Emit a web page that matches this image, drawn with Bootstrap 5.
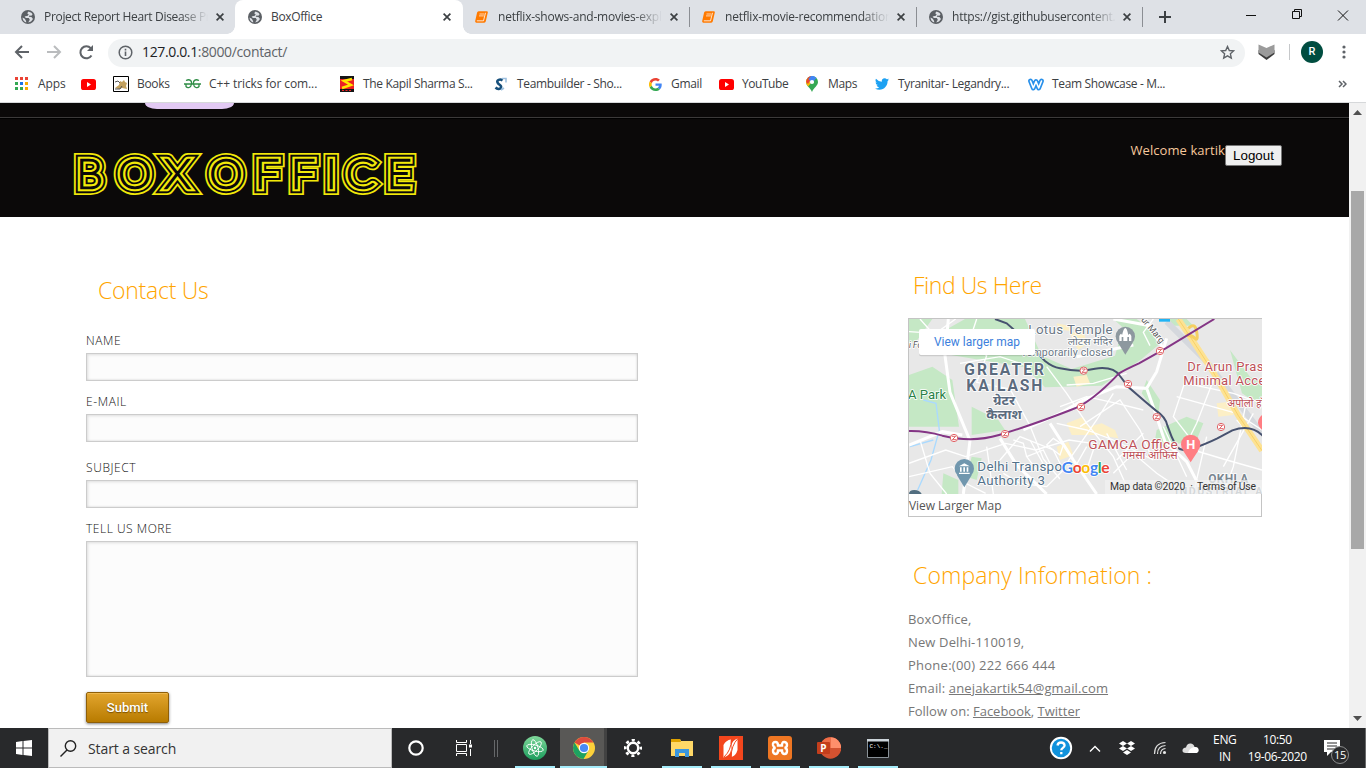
<!DOCTYPE html>
<html lang="en">
<head>
<meta charset="utf-8">
<meta name="viewport" content="width=device-width, initial-scale=1">
<title>BoxOffice</title>
<link href="https://cdn.jsdelivr.net/npm/bootstrap@5.3.0/dist/css/bootstrap.min.css" rel="stylesheet">
<style>
body{font-family:"Open Sans","Noto Sans",sans-serif;font-size:12px;height:768px;overflow:hidden;background:#fff;color:#3c4043}
svg{display:block;flex:none}
/* browser frame */
.tabstrip{height:34px;background:#dee1e6}
.tabitem{height:34px;position:relative;padding-left:16px}
.tabitem .ttl{white-space:nowrap;overflow:hidden;line-height:20px;margin-left:8px;letter-spacing:-.22px}
.fadeout{-webkit-mask-image:linear-gradient(90deg,#000 calc(100% - 28px),transparent)}
.tab-on{background:#fff;border-radius:8px 8px 0 0}
.tab-on::before,.tab-on::after{content:"";position:absolute;bottom:0;width:8px;height:8px}
.tab-on::before{left:-8px;background:radial-gradient(circle at 0 0,transparent 7.5px,#fff 8px)}
.tab-on::after{right:-8px;background:radial-gradient(circle at 100% 0,transparent 7.5px,#fff 8px)}
.tabsep{width:1px;height:20px;background:#8b8e93}
.toolbar{height:36px}
.omnibox{height:28px;border-radius:14px;background:#f1f3f4;margin-left:22px;width:1137px;margin-top:1px;padding-left:10px;padding-right:10px}
.omnibox .addr{font-size:14px;letter-spacing:-.36px;color:#5f6368;margin-left:9px;margin-top:-2px}
.omnibox .addr b{font-weight:400;color:#202124}
.avatar{width:22px;height:22px;background:#004d40;color:#fff;font:500 11px/22px Roboto,sans-serif}
.bookmarks{display:grid;height:33px;padding-left:14px;grid-template-columns:67px 31px 72px 155px 155px 154px 70px 87px 70px 152px 308px 20px;align-items:center;border-bottom:1px solid #d6d8da;letter-spacing:-.1px}
.bm{display:flex;align-items:center;gap:7px;white-space:nowrap;line-height:18px;margin-top:-4px}
.bm.snug{letter-spacing:-.34px}
/* page */
.viewport{height:625px}
.masthead{height:114px;background:#0b0909}
.masthead .topline{height:15px;border-bottom:1px solid #3c3a3a;padding-left:145px}
.pill{width:89px;height:6px;background:#e2c9f3;border-radius:0 0 12px 12px/0 0 6px 6px}
.masthead .inner{border-top:1px solid #000;height:99px;padding:26px 67px 0 72px}
.hello{color:#f7c89c;font-size:13px;line-height:20px;letter-spacing:.08px;margin-top:-5px}
.logout{font:13.333px/17px "Liberation Sans",sans-serif;color:#000;background:#efefef;border:1px solid #767676;border-radius:2px;padding:1px 6px;width:57px;height:21px;white-space:nowrap}
.contact-col{width:552px;margin-left:86px;padding-top:58px}
.info-col{width:354px;margin-left:270px;padding-top:53px}
.ttl-lg{font-size:23px;line-height:30px;font-weight:300;color:#ffa500;margin:0;letter-spacing:-.25px;white-space:nowrap}
.lbl{display:block;line-height:20px;font-size:12px;color:#111;margin:11px 0 2px;letter-spacing:.6px;font-weight:300}
.fld{height:28px;border-radius:0;border:1px solid #ccc;background:#fcfcfc;box-shadow:inset 1px 1px 3px rgba(0,0,0,.12),inset -1px -1px 2px rgba(0,0,0,.06);resize:none;padding:2px 6px}
textarea.fld{height:136px}
.send{width:83px;height:31px;margin-top:15px;border:1px solid #8f5f08;border-radius:2px;background:linear-gradient(#e2a52e,#b87b00);box-shadow:inset 0 1px #edb94f,0 1px 3px rgba(0,0,0,.5);color:#fff;font:500 13px/29px Roboto,sans-serif;text-shadow:0 1px 1px #7a5000;padding:0}
.mapbox{width:354px;height:199px;border:1px solid #c4c4c4;margin-top:18px}
.mapbox a{font-size:12px;line-height:24px;color:#555;text-decoration:none;display:block;letter-spacing:-.05px}
.addrlist{font-size:13px;line-height:23px;margin-top:18px;color:#777;letter-spacing:.14px}
.addrlist a{color:#777}
.sbar{width:17px;background:#f1f1f1}
.sbar .thumb{width:13px;height:358px;background:#a8a8a8;margin-top:72px}
/* taskbar */
.taskbar{height:40px;background:#28292b;color:#fff}
.startbtn{width:48px}
.searchbox{width:344px;height:40px;background:#f1f1f1;border:1px solid #bbb;padding-left:11px;font-size:14px;color:#333;letter-spacing:-.1px}
.app{width:49px;height:40px;position:relative;display:flex;align-items:center;justify-content:center}
.app.run::after{content:"";position:absolute;bottom:0;left:5px;width:40px;height:2px;background:#a5ecfa}
.app.live{background:linear-gradient(90deg,transparent 1px,#595856 1px 45px,#424242 45px 48px,transparent 48px)}
.app.live::after{left:1px;width:47px}
.tray{letter-spacing:-.35px;font-size:12px;line-height:17px;text-align:center}
</style>
</head>
<body>
<svg width="0" height="0" class="position-absolute" aria-hidden="true">
<symbol id="globe" viewBox="0 0 14 14"><circle cx="7" cy="7" r="7" fill="#5b5f64"/><path d="M7.500 1.500 6.200 3.200l1.500 1.400-.9 1.200-3.200.6 1.200 1.500 3 .2 1 1.600-1.600 2.900 2.800-1 2-2.700-1.600-1.900-2.600-.2.6-1.300 2 .2 1.200-1.400-1.200-1.500zM1.500 7.400l2.300 1.400 1.300 2.100.1 1.600C3 11.600 1.700 10 1.500 7.400z" fill="#dee1e6"/></symbol>
<symbol id="xx" viewBox="0 0 8 8"><path d="M.6.6l6.800 6.800M7.400.6.6 7.400" stroke="#3c4043" stroke-width="1.700"/></symbol>
<symbol id="book" viewBox="0 0 13 12"><path d="M3.600.3h8.200q1.300.1 1 1.200l-2 8.700q-.3 1.400-1.600 1.600H1.300Q-.1 11.500.2 10L2.100 1.600Q2.400.4 3.600.3z" fill="#ff7a00"/><path d="M4.500 3h4.800M4 4.900h4.800" stroke="#fff" stroke-width=".7"/><path d="M1.800 9.800h6.700l2-8" stroke="#fff" stroke-width=".8" fill="none"/></symbol>
<symbol id="yt" viewBox="0 0 15 11"><rect width="15" height="11" rx="2.600" fill="#f00"/><path d="M6 3l4 2.500L6 8z" fill="#fff"/></symbol>
</svg>

<!-- tab strip -->
<header>
<div class="tabstrip d-flex align-items-center">
  <div class="tabitem d-flex align-items-center" style="width:235px;padding-left:21px"><svg width="14" height="14"><use href="#globe"/></svg><span class="ttl fadeout" style="width:164px;margin-left:9px;letter-spacing:-.32px">Project Report Heart Disease Prediction</span><svg class="ms-2" width="8" height="8"><use href="#xx"/></svg></div>
  <div class="tabitem tab-on d-flex align-items-center" style="width:228px;padding-left:13px"><svg width="14" height="14"><use href="#globe"/></svg><span class="ttl" style="width:164px;margin-left:9px;letter-spacing:-.35px">BoxOffice</span><svg class="ms-2" width="8" height="8"><use href="#xx"/></svg></div>
  <div class="tabitem d-flex align-items-center" style="width:226px;padding-left:12px"><svg width="13" height="12"><use href="#book"/></svg><span class="ttl fadeout" style="width:164px;margin-left:10px">netflix-shows-and-movies-exploratory</span><svg style="margin-left:8px" width="8" height="8"><use href="#xx"/></svg></div><span class="tabsep"></span>
  <div class="tabitem d-flex align-items-center" style="width:226px;padding-left:12px"><svg width="13" height="12"><use href="#book"/></svg><span class="ttl fadeout" style="width:164px;margin-left:10px">netflix-movie-recommendation-engine</span><svg style="margin-left:8px" width="8" height="8"><use href="#xx"/></svg></div><span class="tabsep"></span>
  <div class="tabitem d-flex align-items-center" style="width:225px;padding-left:12px"><svg width="14" height="14"><use href="#globe"/></svg><span class="ttl fadeout" style="width:164px;margin-left:9px">https://gist.githubusercontent.com/raw</span><svg style="margin-left:7px" width="8" height="8"><use href="#xx"/></svg></div><span class="tabsep"></span>
  <svg style="margin-left:16px" width="12" height="12"><path d="M6 0v12M0 6h12" stroke="#3c4043" stroke-width="2"/></svg>
  <svg class="ms-auto me-3" width="106" height="14" style="margin-top:-7px" fill="none" stroke="#111"><path d="M2 8.500h10M48.500 4.500h7v7h-7zM50.500 4.500v-2h7v7h-2M94 3.500l10 10M104 3.500l-10 10"/></svg>
</div>
<div class="toolbar d-flex align-items-center">
  <svg width="86" height="16" style="margin-left:14px" fill="none" stroke="#5f6368" stroke-width="2"><path d="M15 8H2M8 2 2 8l6 6"/><path d="M33 8h13M40 2l6 6-6 6" stroke="#babcbe"/><path d="M77.500 11.500A6 6 0 1 1 76.800 4.200"/><path d="M79 1v6h-6z" fill="#5f6368" stroke="none"/></svg>
  <div class="omnibox d-flex align-items-center" style="margin-left:8px">
    <svg width="15" height="15" viewBox="0 0 15 15"><circle cx="7.500" cy="7.500" r="6.300" fill="none" stroke="#5f6368" stroke-width="1.500"/><path d="M7.500 6.600v4.400M7.500 3.800v1.600" stroke="#5f6368" stroke-width="1.600"/></svg>
    <span class="addr"><b>127.0.0.1</b>:8000/contact/</span>
    <svg class="ms-auto" width="15" height="15" viewBox="0 0 15 15"><path d="M7.500 1.500l1.800 4 4.300.4-3.200 2.900.9 4.300-3.800-2.300-3.800 2.300.9-4.300L1.400 5.900l4.300-.4z" fill="none" stroke="#5f6368" stroke-width="1.400"/></svg>
  </div>
  <svg width="17" height="16" style="margin-left:13px" viewBox="0 0 17 16"><path d="M.5 6l8 5.500 8-5.500v4l-8 6-8-6z" fill="#3d3d3d"/><path d="M.5.500 8.500 4l8-3.500v8l-8 5-8-5z" fill="#9b9b9b"/></svg>
  <span class="d-block" style="width:1px;height:16px;background:#c6c8ca;margin-left:14px"></span>
  <span class="avatar rounded-circle text-center" style="margin-left:11px">R</span>
  <svg width="4" height="14" style="margin-left:19px" fill="#5f6368"><circle cx="2" cy="2" r="1.600"/><circle cx="2" cy="7" r="1.600"/><circle cx="2" cy="12" r="1.600"/></svg>
</div>
<nav class="bookmarks">
  <span class="bm" style="gap:9px"><svg width="15" height="14"><g fill="#ea4335"><path d="M1 0h3v3H1zM6 0h3v3H6zM11 0h3v3h-3z"/></g><path d="M1 5h3v3H1zM1 10h3v3H1zM6 10h3v3H6z" fill="#34a853"/><path d="M6 5h3v3H6z" fill="#1a73e8"/><path d="M11 5h3v3h-3zM11 10h3v3h-3z" fill="#f9ab00"/></svg>Apps</span>
  <span class="bm"><svg width="15" height="11"><use href="#yt"/></svg></span>
  <span class="bm snug" style="gap:8px"><svg width="17" height="16"><path d="M1.500.500h15v15h-15z" fill="#fff" stroke="#000"/><path d="M3 12l4-3 1-4 2 1 2-2 1 2 2 1-1 3 1 3-5-1-3 1z" fill="#c3a15e"/><path d="M3 6l3-1 2 2M3 13h5l2-3" stroke="#555" fill="none"/></svg>Books</span>
  <span class="bm" style="gap:8px"><svg width="17" height="10" fill="none" stroke="#2f8d46" stroke-width="1.300"><path d="M2 1.500C6-.500 8 2 7.500 5 7 9 3.500 9.500 2 7.500V5M15 1.500C11-.500 9 2 9.500 5c.5 4 4 4.500 5.500 2.500V5M0 5h17"/></svg>C++ tricks for com...</span>
  <span class="bm snug" style="gap:9px"><svg width="15" height="16"><path d="M1 0h14v16H1z" fill="#ec1f24"/><path d="M1 0h14v3H1zM1 13h14v3H1z" fill="#151515"/><path d="M13 3 5 5l7 4-9 3" stroke="#ffe600" stroke-width="2.500" fill="none"/><path d="M3 14.500h10" stroke="#e22" stroke-dasharray="2 1.500"/></svg>The Kapil Sharma S...</span>
  <span class="bm snug" style="gap:9px"><svg width="14" height="15"><path d="M8.500 3.500C6 1.500 2.500 3 3.500 5.500S8 8 7 10.500 3 12 1.500 10.500" stroke="#17507c" stroke-width="2.500" fill="none"/><path d="M8 1.500h4v4M7 13l3-2" stroke="#9ec0df" stroke-width="1.600" fill="none"/></svg>Teambuilder - Sho...</span>
  <span class="bm snug" style="gap:9px;padding-left:1px"><svg width="13" height="13" viewBox="0 0 48 48"><path fill="#ea4335" d="M24 9.500c3.500 0 6.700 1.200 9.200 3.600l6.900-6.900C35.900 2.400 30.500 0 24 0 14.600 0 6.500 5.400 2.600 13.200l8 6.200C12.400 13.700 17.700 9.500 24 9.500z"/><path fill="#4285f4" d="M47 24.600c0-1.600-.2-3.100-.4-4.600H24v9h12.900c-.6 3-2.200 5.500-4.700 7.200l7.700 6C44.400 38 47 31.800 47 24.600z"/><path fill="#fbbc05" d="M10.500 28.600a14 14 0 0 1 0-9.200l-8-6.200a24 24 0 0 0 0 21.600z"/><path fill="#34a853" d="M24 48c6.500 0 11.900-2.100 15.900-5.800l-7.700-6c-2.200 1.500-4.900 2.300-8.200 2.300-6.300 0-11.600-4.200-13.500-9.900l-8 6.200C6.500 42.600 14.600 48 24 48z"/></svg>Gmail</span>
  <span class="bm snug" style="gap:8px;padding-left:1px"><svg width="15" height="11"><use href="#yt"/></svg><span style="letter-spacing:-.45px">YouTube</span></span>
  <span class="bm snug" style="gap:10px;padding-left:1px"><svg width="12" height="16" viewBox="0 0 12 16"><path d="M6 0a6 6 0 0 1 6 6c0 4-4 5-6 10C4 11 0 10 0 6a6 6 0 0 1 6-6z" fill="#34a853"/><path d="M0 6a6 6 0 0 1 1.500-4L6 6l-4 4.500Q0 8.500 0 6z" fill="#fbbc04"/><path d="M1.500 2.100A6 6 0 0 1 5 .1L4 4.500z" fill="#ea4335"/><path d="M5 0a6 6 0 0 1 5.500 2L5 8 2.500 3z" fill="#4285f4"/><path d="M1.300 2.300 4 4.500 2 8 0 6z" fill="#ea4335"/><circle cx="6" cy="6" r="2.100" fill="#fff"/></svg>Maps</span>
  <span class="bm snug" style="gap:9px"><svg width="14" height="12" viewBox="0 0 24 20"><path fill="#1da1f2" d="M24 2.400a10 10 0 0 1-2.800.8A5 5 0 0 0 23.300.5a10 10 0 0 1-3.100 1.200 4.900 4.900 0 0 0-8.400 4.500A14 14 0 0 1 1.700 1.100a4.900 4.900 0 0 0 1.500 6.500A5 5 0 0 1 1 7v.1a4.900 4.900 0 0 0 4 4.800 5 5 0 0 1-2.300.1 4.900 4.900 0 0 0 4.600 3.400A9.900 9.900 0 0 1 0 17.500a14 14 0 0 0 7.500 2.200c9.100 0 14.300-7.700 14-14.600A10 10 0 0 0 24 2.400z"/></svg>Tyranitar- Legandry...</span>
  <span class="bm snug" style="gap:8px;padding-left:1px"><svg width="16" height="13" fill="none" stroke-linecap="round" stroke-linejoin="round"><path d="M2.500 3l2.800 7L8 3.500 10.700 10 13.500 3" stroke="#2990ea" stroke-width="4.800"/><path d="M2.500 3l2.800 7L8 3.500 10.700 10 13.500 3" stroke="#fff" stroke-width="1.600"/></svg>Team Showcase - M...</span>
  <svg width="9" height="8" style="margin-top:-4px;margin-left:3px" fill="none" stroke="#5f6368" stroke-width="1.500"><path d="M1 1l3 3-3 3M5 1l3 3-3 3"/></svg>
</nav>
</header>

<!-- page -->
<div class="viewport d-flex">
<main class="flex-fill bg-white">
  <div class="masthead">
    <div class="topline"><div class="pill"></div></div>
    <div class="inner d-flex justify-content-between align-items-start">
      <svg width="348" height="56" viewBox="72 145 348 56" role="img">
        <defs><text id="brand" y="187.800" font-family="Lato,sans-serif" font-weight="100" font-size="39" x="70.800 109.500 152.500 193.900 236.100 269.400 301.800 320.300 358.200">BOXOFFICE</text></defs>
        <g fill="#0b0909" transform="scale(1.080 1)">
        <use href="#brand" stroke="#f2e90a" stroke-width="13.800"/><use href="#brand" stroke="#0b0909" stroke-width="10.400"/><use href="#brand" stroke="#f2e90a" stroke-width="6.600"/><use href="#brand" stroke="#0b0909" stroke-width="2.400"/></g>
      </svg>
      <div class="d-flex"><span class="hello">Welcome kartik</span><button class="logout">Logout</button></div>
    </div>
  </div>
  <div class="d-flex">
    <form class="contact-col">
      <h2 class="ttl-lg" style="padding-left:12px">Contact Us</h2>
      <label class="lbl" style="margin:26px 0 2px">NAME</label><input class="form-control fld">
      <label class="lbl">E-MAIL</label><input class="form-control fld">
      <label class="lbl" style="margin-top:16px">SUBJECT</label><input class="form-control fld">
      <label class="lbl" style="letter-spacing:.52px">TELL US MORE</label><textarea class="form-control fld"></textarea>
      <button type="button" class="send d-block">Submit</button>
    </form>
    <aside class="info-col">
      <h2 class="ttl-lg" style="padding-left:5px;letter-spacing:-.45px">Find Us Here</h2>
      <div class="mapbox">
        <svg width="353" height="175" viewBox="27 177 1059 525" font-family="Roboto,'Noto Sans',sans-serif">
          <rect x="27" y="177" width="1059" height="525" fill="#e8e8e8"/>
          <g fill="#c5e8c5">
            <path d="M27 177h70l-50 70H27zM195 177h180l50 110 90 40 130-40 20-70 60-20 60 50-60 50-120 80-170 5-60-60-240-40-20-60zM27 345l70-25 60 40 20 140H27zM215 440l80 40 20 30-100 15zM640 177h70l50 40-30 40zM740 360l40 60-5 50-50-70zM770 510l90-40 50 20-20 50-100 20-25-20zM215 590l30 5-15 65-30-10zM130 640l45 20v42h-50zM800 177h60l20 20h-60zM990 270l60 80 36 20v70l-60-40z"/></g>
          <g fill="#fcefc6"><path d="M510 220l40-10 10 40-25 20-15-25zM520 350l40-5 10 25-40 10zM500 490l50-20 15 30 40-10 40 20 10 25-60-10-80 0zM950 430l40-5 10 40-45 5zM470 560l35-15 15 40-40 15zM470 190l50 10-5 14-40-6z"/></g>
          <path d="M800 185l120 120 166 215" stroke="#d5d8dd" stroke-width="18" fill="none"/>
          <path d="M70 420l38 10 10 80-25 90-40 90M100 540l-70 20" stroke="#aadaff" stroke-width="4" fill="none"/>
          <g fill="none" stroke="#fff" stroke-width="4">
            <path d="M27 215l80 5 60-43M60 177l80 90M230 177l-20 60 50 50-30 80 100 20 60 110 40 100 50 60M180 310l120-20 90 30M27 610l110-40 60 20 120-40 90 20 100-30 70 10M27 650l130-30 40 50 60 30M60 540l30 100 50 62M440 320l60 80 60 90 80 100 50 112M470 490l90 20 80 30 120 60M480 440l80-30 90 20 80 20M500 610l90-130 50-80M540 500l120-80 60 90 30 70M300 600l60-70 100 40 30 60-50 50-80-10-50-30M380 590l50-20 20 40-40 20zM260 560l20 142M640 640l60-60 70 60 60 40M860 370l140 30 86 30M830 410l180 50 76 50M860 350l-40 120 70 90M960 310l-70 180-40 80M1040 420l-40 200-30 82M880 570l100 30 106 30M920 530l-40 172M760 177l-30 40 20 40M680 340l-100 30-80 5"/>
            <path d="M440 555l20-20 30 20-10 30zM340 540l30 10 10 40M390 540l50 90M560 560l-40 70M590 540l-30 90M620 520l60 110M730 520l-80 80M790 500l70 150M1010 480l76 80M1060 460l-90 160"/></g>
          <g fill="none" stroke="#fff" stroke-width="9"><path d="M145 177l-10 110 15 110 60 145-20 160M27 555l100-40 60 10M800 235l-30 100-30 50-90-5-100 40-70 40-110 50M740 385l25 70 30 90 65 60 50 97M300 535l50 80 90 87M450 490l70 110 70 102M640 177l110 20 40 70M530 290l170-35"/></g>
          <path d="M835 177l40 60 65 100 75 130 71 105" stroke="#fde293" stroke-width="18" fill="none"/><path d="M835 177l40 60 65 100 75 130 71 105" stroke="#f5c952" stroke-width="2" fill="none"/>
          <path d="M865 205q20-20 25 10t-5 20-25-10" stroke="#f5cf62" stroke-width="9" fill="none"/>
          <g fill="none" stroke-width="6"><path d="M285 177l35 13 40 35 75 78q22 18 45 22 35 8 70 7l35-6q55-8 75 22l25 33 52 45 30 25q30 20 35 45 12 35 25 60 15 20 45 12 50-18 80-33l45-24q55-20 90 15l34 44" stroke="#47526f"/><path d="M27 513q50-1 100 14 90 22 170-2 100-30 215-75 60-20 145-110 20-12 60-30l80-45 146-88" stroke="#843585"/></g>
          <g fill="#fff" stroke="#e06468" stroke-width="3"><g id="station"><circle cx="162" cy="534" r="11"/><path d="M156 529h11l-10 10h12" fill="none"/></g><use href="#station" x="153" y="-12"/><use href="#station" x="381" y="-93"/><use href="#station" x="389" y="-202"/><use href="#station" x="522" y="-162"/><use href="#station" x="618" y="-261"/><use href="#station" x="608" y="-63"/><use href="#station" x="801" y="-33"/></g>
          <path d="M777 177h33v8h-33z" fill="#20b4f5"/>
          <g fill="#8d989f"><circle cx="676" cy="229" r="29"/><path d="M654 248l22 36 22-36z"/></g><path d="M658 243v-15q6-12 8-2 5-22 10-22t9 22q3-10 9 2v15h-7v-12h-5v12h-12v-12h-5v12z" fill="#fff"/>
          <g fill="#7197ae"><circle cx="193" cy="626" r="29"/><path d="M171 646l22 36 22-36z"/><path d="M27 702q0-12 16-12t22 12z" fill="#526e80"/></g><path d="M177 619l16-9 16 9zM180 622h5v13h-5zM190 622h5v13h-5zM200 622h5v13h-5zM177 638h32v4h-32z" fill="#fff"/>
          <g fill="#ff7e83"><circle cx="872" cy="553" r="29"/><path d="M850 573l22 34 22-34zM1086 465q-24 22 0 45z"/></g>
          <g stroke="#fff" stroke-width="5" paint-order="stroke" stroke-linejoin="round">
            <text x="859" y="568" font-size="40" font-weight="700" fill="#fff" stroke="none" textLength="27" lengthAdjust="spacingAndGlyphs">H</text>
            <g fill="#6a7785"><text x="385" y="223" font-size="40" textLength="253">Lotus Temple</text><text x="503" y="255" font-size="28" textLength="135" lengthAdjust="spacingAndGlyphs">लोटस मंदिर</text><text x="362" y="289" font-size="32" textLength="276">Temporarily closed</text></g>
            <g fill="#5b6b7e" font-weight="700"><text x="193" y="346" font-size="47" textLength="239">GREATER</text><text x="199" y="394" font-size="47" textLength="228">KAILASH</text><text x="279" y="436" font-size="38" textLength="66" lengthAdjust="spacingAndGlyphs">ग्रेटर</text><text x="259" y="478" font-size="38" textLength="106" lengthAdjust="spacingAndGlyphs">कैलाश</text></g>
            <text x="24" y="417" font-size="39" textLength="114" lengthAdjust="spacingAndGlyphs" fill="#278145">A Park</text>
            <text x="27" y="264" font-size="25" font-style="italic" fill="#555">i Fo</text>
            <text transform="translate(722 180) rotate(50)" font-size="27" fill="#555">ur Marg</text>
            <g fill="#bd5058"><text x="862" y="334" font-size="39" letter-spacing=".9">Dr Arun Prasad</text><text x="850" y="376" font-size="39" letter-spacing=".9">Minimal Access</text><text x="982" y="441" font-size="31">अपोलो हॉस्पि</text><text x="565" y="567" font-size="41" textLength="268">GAMCA Office</text><text x="668" y="596" font-size="31" textLength="165" lengthAdjust="spacingAndGlyphs">गमसा ऑफिस</text></g>
            <g fill="#52718a"><text x="232" y="632" font-size="40" textLength="254">Delhi Transpo</text><text x="232" y="674" font-size="40" textLength="203">Authority 3</text></g>
            <g fill="#7a8791" font-weight="700"><text x="925" y="670" font-size="36" textLength="120">OKHLA</text><text x="825" y="704" font-size="32" textLength="262">INDUSTRIAL A</text></g>
            <text x="485" y="640" font-size="47" font-weight="700" font-family="Lato,sans-serif" textLength="144"><tspan fill="#4285f4">G</tspan><tspan fill="#ea4335">o</tspan><tspan fill="#fbbc05">o</tspan><tspan fill="#4285f4">g</tspan><tspan fill="#34a853">l</tspan><tspan fill="#ea4335">e</tspan></text>
          </g>
          <rect x="615" y="660" width="471" height="42" fill="#f2f2f2" opacity=".75"/>
          <g font-size="31" fill="#333"><text x="630" y="690" textLength="226">Map data ©2020</text><text x="871" y="690">·</text><text x="891" y="690" textLength="177">Terms of Use</text></g>
          <rect x="57" y="211" width="348" height="78" rx="6" fill="#000" opacity=".12"/><rect x="57" y="207" width="348" height="78" rx="6" fill="#fff"/><text x="102" y="258" font-size="38" textLength="258" lengthAdjust="spacingAndGlyphs" fill="#3d7fdc">View larger map</text>
        </svg>
        <a href="#">View Larger Map</a>
      </div>
      <h2 class="ttl-lg" style="padding-left:5px;margin-top:43px;letter-spacing:.12px">Company Information :</h2>
      <div class="addrlist">
        <div>BoxOffice,</div><div>New Delhi-110019,</div><div style="letter-spacing:.25px">Phone:(00) 222 666 444</div>
        <div>Email: <a href="#">anejakartik54@gmail.com</a></div><div style="letter-spacing:0">Follow on: <a href="#">Facebook</a>, <a href="#">Twitter</a></div>
      </div>
    </aside>
  </div>
</main>
<div class="sbar d-flex flex-column align-items-center">
  <svg width="9" height="5" style="margin-top:7px;margin-bottom:4px"><path d="M0 5 4.500 0 9 5z" fill="#505050"/></svg>
  <div class="thumb"></div>
  <svg class="mt-auto" width="9" height="5" style="margin-bottom:7px"><path d="M0 0l4.500 5L9 0z" fill="#505050"/></svg>
</div>
</div>

<!-- taskbar -->
<footer class="taskbar d-flex align-items-center position-relative">
  <div class="startbtn"><svg class="mx-auto" width="16" height="16" fill="#fff"><path d="M0 2l6.500-.9v6.400H0zM7.500 1 16 0v7.500H7.500zM0 8.500h6.500v6.400L0 14zM7.500 8.500H16V16l-8.500-1z"/></svg></div>
  <div class="searchbox d-flex align-items-center"><svg width="17" height="17" fill="none" stroke="#222" stroke-width="1.400"><circle cx="10.500" cy="6" r="5.200"/><path d="M7 10 .5 16.500"/></svg><span style="margin-left:11px">Start a search</span></div>
  <svg width="16" height="16" style="margin-left:16px"><circle cx="8" cy="8" r="6.700" fill="none" stroke="#fff" stroke-width="2.200"/></svg>
  <svg width="17" height="16" style="margin-left:32px" fill="none" stroke="#fff"><path d="M.500 0v2.500h10V0M.500 4.500h10v7H.500zM.500 16v-2.500h10V16M14.500 0v4M14.500 9v7"/><path d="M13 4.500h3v3h-3z" fill="#fff" stroke="none"/></svg>
  <svg width="5" height="17" style="margin-left:21px" stroke="#66686a"><path d="M.500 0v17M3.500 0v17"/></svg>
  <div class="d-flex" style="margin-left:11px">
    <div class="app run"><svg width="24" height="24"><defs><linearGradient id="atomg" x2="0" y2="1"><stop stop-color="#7fd79a"/><stop offset="1" stop-color="#1c9d5d"/></linearGradient></defs><circle cx="12" cy="12" r="12" fill="url(#atomg)"/><g fill="none" stroke="#fff" stroke-width=".9"><ellipse cx="12" cy="12" rx="3" ry="8.500" transform="rotate(-15 12 12)"/><ellipse cx="12" cy="12" rx="3" ry="8.500" transform="rotate(45 12 12)"/><ellipse cx="12" cy="12" rx="3" ry="8.500" transform="rotate(105 12 12)"/></g><circle cx="12" cy="12" r="1.200" fill="#fff"/></svg></div>
    <div class="app run live"><svg width="22" height="22"><circle cx="11" cy="11" r="11" fill="#fdd13a"/><path d="M11 11 1.500 5.500A11 11 0 0 1 20.500 5.500H11z" fill="#dd4b3e"/><path d="M1.500 5.500A11 11 0 0 0 10.500 22l5-8.500L11 11l-4.700 2.500z" fill="#1da261"/><circle cx="11" cy="11" r="5.200" fill="#fff"/><circle cx="11" cy="11" r="4.100" fill="#4a8af4"/></svg></div>
    <div class="app"><svg width="18" height="18"><circle cx="9" cy="9" r="7.800" fill="none" stroke="#fff" stroke-width="2.600" stroke-dasharray="3.060 3.060" stroke-dashoffset="1.500"/><circle cx="9" cy="9" r="5.200" fill="none" stroke="#fff" stroke-width="2.400"/></svg></div>
    <div class="app run"><svg width="22" height="18"><path d="M0 0h9l1 2h12v15H0z" fill="#ffd867"/><path d="M0 0h9l1 3H0z" fill="#dfa200"/><path d="M4 18v-8h14v8h-4v-4H8v4z" fill="#3b97de"/></svg></div>
    <div class="app run"><svg width="24" height="24"><path d="M0 0h24v24H0z" fill="#f3461d"/><path d="M4.500 21.500V9Q7 4 12 3.500V14q-1 5.500-7.500 7.500zM12.500 21V9.500q.5-5 6-7V14q-1.500 5.500-6 7z" fill="#fff"/><path d="M5 21Q12.500 14 12.300 3.500M12.200 21.500Q12 9.500 19 2.500" stroke="#f3461d" stroke-width="1" fill="none"/></svg></div>
    <div class="app run"><svg width="24" height="24"><rect width="24" height="24" rx="3" fill="#ee7623"/><path d="M7.500 6Q4.500 6 5 9q.5 2.500 2.500 3Q5 12.500 5 15t2.500 3Q10 18 10 14.500h4q0 3.500 2.500 3.500t2.500-3-2.500-3Q19 11.500 19 9t-2.500-3T14 9.500h-4Q10 6 7.500 6z" fill="none" stroke="#fff" stroke-width="2.400"/></svg></div>
    <div class="app run"><svg width="24" height="22"><circle cx="13.500" cy="11" r="10.700" fill="#d35230"/><path d="M13.500.3V11h10.700A10.700 10.700 0 0 0 13.500.3z" fill="#ff8f6b"/><path d="M2.800 11A10.700 10.700 0 0 1 13.500.3V11z" fill="#ed6c47"/><rect y="5" width="13" height="12" rx="1" fill="#c43e1c"/><text x="3.300" y="14.500" font-family="Open Sans" font-weight="700" font-size="10" fill="#fff">P</text></svg></div>
    <div class="app run"><svg width="22" height="19"><path d="M.5.500h21v18H.5z" fill="#000" stroke="#8a9298"/><path d="M0 0h22v2.500H0z" fill="#ccd4da"/><text x="2.500" y="9" font-family="Liberation Mono" font-size="6" fill="#fff">C:\._</text></svg></div>
  </div>
  <div class="tray d-flex align-items-center ms-auto" style="width:317px">
    <svg width="24" height="24"><circle cx="12" cy="12" r="10.200" fill="#1092dc" stroke="#fff" stroke-width="1.900"/><path d="M8.500 9.500q.4-3 3.600-3t3.500 2.800q0 1.700-1.800 2.600-1.500.8-1.500 2.300M12.300 16v2.300" fill="none" stroke="#fff" stroke-width="2.300"/></svg>
    <svg width="12" height="7" style="margin-left:16px"><path d="M1 6.500l5-5 5 5" fill="none" stroke="#fff" stroke-width="1.400"/></svg>
    <svg width="16" height="14" style="margin-left:18px" fill="#fff"><path d="M4 0l4 2.500L4 5 0 2.500zM12 0l4 2.500L12 5 8 2.500zM4 5l4 2.500L4 10 0 7.500zM12 5l4 2.500-4 2.500-4-2.500zM8 9l4 2.500L8 14l-4-2.500z"/></svg>
    <svg width="14" height="14" style="margin-left:18px" fill="none" stroke="#ddd" stroke-width="1.200"><circle cx="11.500" cy="11.500" r="1" fill="#fff"/><path d="M7.500 13q0-5 5-5.500M4.500 13q0-8 8-8.500M1.500 13Q1.500 2 12.500 1.500"/></svg>
    <svg width="17" height="12" style="margin-left:15px" viewBox="0 0 17 12"><path d="M4 11Q0 11 .5 8 1 5.500 4 5.500 5 1 9 1.500q3 .5 3.500 3.500 4 0 4 3.200Q16.500 11 13 11z" fill="#ddd"/><path d="M6 11q1-5 6.500-6 4 0 4 3.200Q16.500 11 13 11z" fill="#fff"/></svg>
    <div style="width:40px;margin-left:6px;margin-top:-1px">ENG<br>IN</div>
    <div style="width:66px;margin-top:-1px">10:50<br>19-06-2020</div>
    <svg width="27" height="27" style="margin-left:13px;margin-top:8px"><path d="M1 1h16v12H8l-4 4v-4H1z" fill="#fff"/><path d="M4 4h10M4 7h10M4 10h7" stroke="#28292b"/><circle cx="17" cy="16" r="8.500" fill="#28292b" stroke="#8b8c8d"/><text x="17" y="20" text-anchor="middle" font-size="11" fill="#fff" font-family="Open Sans">15</text></svg>
    <span class="d-block" style="width:1px;height:40px;background:#68696a;margin-left:15px"></span>
  </div>
</footer>
<script src="https://cdn.jsdelivr.net/npm/bootstrap@5.3.0/dist/js/bootstrap.bundle.min.js"></script>
</body>
</html>
